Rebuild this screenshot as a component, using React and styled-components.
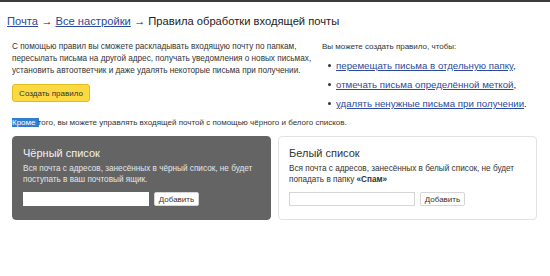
import styled, { createGlobalStyle } from "styled-components";

const GlobalStyle = createGlobalStyle`
  body {
    margin: 0;
    background: #fff;
    font-family: "Liberation Sans", Arial, sans-serif;
    color: #222;
  }
`;

const TopBar = styled.div`
  height: 2px;
  background: #3b3b3b;
`;

const Page = styled.div`
  padding: 0 12px;
`;

const Crumbs = styled.h1`
  margin: 12px 0 0 -5px;
  font-size: 11.2px;
  font-weight: normal;
  line-height: 14px;
  color: #222;
  white-space: nowrap;
`;

const Link = styled.a`
  color: #2b4a9c;
  text-decoration: underline;
  text-underline-offset: 1px;
`;

const Intro = styled.div`
  display: flex;
  margin-top: 13px;
`;

const LeftCol = styled.div`
  width: 310px;
`;

const Text = styled.p`
  margin: 0;
  font-size: ${(p) => p.size || 8.2}px;
  line-height: ${(p) => p.lh || 12}px;
  color: ${(p) => p.color || "#333"};
  white-space: nowrap;
`;

const RightCol = styled.div``;

const List = styled.ul`
  margin: 3px 0 0;
  padding: 0 0 0 14px;
  list-style: none;
`;

const Item = styled.li`
  position: relative;
  font-size: 9.7px;
  line-height: 19px;
  white-space: nowrap;

  &::before {
    content: "";
    position: absolute;
    left: -8px;
    top: 8px;
    width: 3px;
    height: 3px;
    border-radius: 50%;
    background: #333;
  }
`;

const YellowButton = styled.button`
  display: block;
  margin-top: 7px;
  width: 78px;
  height: 18px;
  padding: 0;
  border: 1px solid #e3bd1e;
  border-radius: 3px;
  background: #fcd940;
  font-family: inherit;
  font-size: 8px;
  color: #333;
`;

const Note = styled.p`
  margin: 4px 0 0;
  font-size: 8px;
  line-height: 12px;
  color: #333;
  white-space: nowrap;
`;

const Selected = styled.span`
  background: #2e7fd4;
  color: ${(p) => (p.partial ? "#333" : "#fff")};
  ${(p) =>
    p.partial &&
    "background: linear-gradient(90deg, #2e7fd4 50%, transparent 50%);"}
`;

const Cards = styled.div`
  display: grid;
  grid-template-columns: 259px 259px;
  gap: 7px;
  margin-top: 7px;
`;

const Card = styled.div`
  height: 84px;
  box-sizing: border-box;
  padding: 10px 10px 0;
  border-radius: 4px;
  background: ${(p) => (p.dark ? "#646464" : "#fff")};
  border: 1px solid ${(p) => (p.dark ? "#646464" : "#e2e2e2")};
`;

const CardTitle = styled.div`
  font-size: 11px;
  line-height: 13px;
  color: ${(p) => (p.dark ? "#f2f2f2" : "#333")};
`;

const CardText = styled(Text)`
  margin-top: 4px;
`;

const Form = styled.div`
  display: flex;
  gap: 5px;
  margin-top: 7px;
`;

const Field = styled.input`
  width: 126px;
  height: 14px;
  box-sizing: border-box;
  border: 1px solid ${(p) => (p.dark ? "#fff" : "#d6d6d6")};
  background: #fff;
  padding: 0;
`;

const AddButton = styled.button`
  width: 45px;
  height: 14px;
  padding: 0;
  border: 1px solid #d6d6d6;
  border-radius: 2px;
  background: #fff;
  font-family: inherit;
  font-size: 8px;
  color: #333;
`;

export default function App() {
  return (
    <>
      <GlobalStyle />
      <TopBar />
      <Page>
        <Crumbs>
          <Link>Почта</Link> → <Link>Все настройки</Link> → Правила обработки
          входящей почты
        </Crumbs>
        <Intro>
          <LeftCol>
            <Text>
              С помощью правил вы сможете раскладывать входящую почту по папкам,
              <br />
              пересылать письма на другой адрес, получать уведомления о новых
              письмах,
              <br />
              установить автоответчик и даже удалять некоторые письма при
              получении.
            </Text>
            <YellowButton>Создать правило</YellowButton>
          </LeftCol>
          <RightCol>
            <Text size={8}>Вы можете создать правило, чтобы:</Text>
            <List>
              <Item>
                <Link>перемещать письма в отдельную папку</Link>,
              </Item>
              <Item>
                <Link>отмечать письма определённой меткой</Link>,
              </Item>
              <Item>
                <Link>удалять ненужные письма при получении</Link>.
              </Item>
            </List>
          </RightCol>
        </Intro>
        <Note>
          <Selected>Кроме </Selected>
          <Selected partial>т</Selected>ого, вы можете управлять входящей почтой
          с помощью чёрного и белого списков.
        </Note>
        <Cards>
          <Card dark>
            <CardTitle dark>Чёрный список</CardTitle>
            <CardText lh={10.5} color="#e4e4e4">
              Вся почта с адресов, занесённых в чёрный список, не будет
              <br />
              поступать в ваш почтовый ящик.
            </CardText>
            <Form>
              <Field dark />
              <AddButton>Добавить</AddButton>
            </Form>
          </Card>
          <Card>
            <CardTitle>Белый список</CardTitle>
            <CardText lh={10.5}>
              Вся почта с адресов, занесённых в белый список, не будет
              <br />
              попадать в папку <b>«Спам»</b>
            </CardText>
            <Form>
              <Field />
              <AddButton>Добавить</AddButton>
            </Form>
          </Card>
        </Cards>
      </Page>
    </>
  );
}
